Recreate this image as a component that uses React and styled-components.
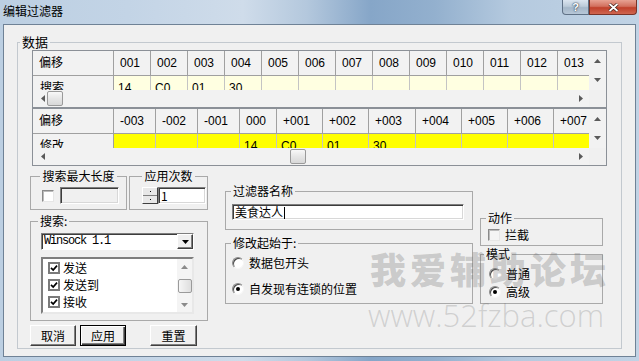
import React from "react";
import styled, { createGlobalStyle } from "styled-components";

const UI = '"Noto Sans CJK SC", "Liberation Sans", sans-serif';
const CELL = '"Liberation Sans", "Noto Sans CJK SC", sans-serif';

const GlobalStyle = createGlobalStyle`
  html, body { margin: 0; padding: 0; }
  body { width: 639px; height: 361px; overflow: hidden; background: #b9cde1; }
`;

const Window = styled.div`
  position: relative;
  box-sizing: border-box;
  width: 639px;
  height: 361px;
  display: flex;
  flex-direction: column;
  padding: 0 3px 4px 3px;
  font-family: ${UI};
  font-size: 12px;
  color: #000;
  background: linear-gradient(
    90deg,
    #bccfe2 0%,
    #c3d4e6 20%,
    #cfdcea 38%,
    #b4c8dd 48%,
    #86a6c8 58%,
    #93b0ce 68%,
    #b5cadf 80%,
    #c1d3e5 100%
  );
`;

const TitleBar = styled.div`
  flex: none;
  height: 24px;
  display: flex;
  justify-content: space-between;
  align-items: flex-start;
`;

const Title = styled.div`
  padding-top: 3px;
  line-height: 16px;
  font-size: 12px;
`;

const Caption = styled.div`
  display: flex;
  margin-right: -1px;
`;

const CaptionButton = styled.div`
  box-sizing: border-box;
  width: ${p => p.$w}px;
  height: 15px;
  display: flex;
  align-items: center;
  justify-content: center;
  border: 1px solid ${p => (p.$close ? "#7a3328" : "#5f7186")};
  border-top: none;
  border-radius: ${p => (p.$close ? "0 0 4px 0" : "0 0 0 4px")};
  background: ${p =>
    p.$close
      ? "linear-gradient(180deg, #e7a293 0%, #d2705e 45%, #c0402b 55%, #cf6650 100%)"
      : "linear-gradient(180deg, #dbe5ef 0%, #bccbd9 45%, #a5b7c9 55%, #b7c7d8 100%)"};
  color: #fff;
  font: bold 11px/1 "Liberation Sans", sans-serif;
  text-shadow: 0 0 2px #2a3a4c, 0 0 1px #2a3a4c;
`;

const Client = styled.div`
  flex: 1;
  display: flex;
  flex-direction: column;
  border: 1px solid #6f8296;
  background: #f0f0f0;
  padding: 9px 13px 7px 13px;
`;

const Group = styled.fieldset`
  box-sizing: border-box;
  margin: 0;
  padding: ${p => p.$pad || "0"};
  min-width: 0;
  width: ${p => (p.$w ? `${p.$w}px` : "auto")};
  height: ${p => (p.$h ? `${p.$h}px` : "auto")};
  flex: ${p => (p.$grow ? 1 : "none")};
  border: 1px solid ${p => p.$line || "#a9a9a9"};
`;

const Legend = styled.legend`
  padding: 0 2px;
  margin: ${p => (p.$center ? "0 auto" : `0 0 0 ${p.$x ?? 6}px`)};
  font-size: ${p => p.$size || 12}px;
  line-height: 16px;
  height: 16px;
`;

const GridFrame = styled.div`
  display: grid;
  grid-template-columns: 1fr 17px;
  grid-template-rows: 39px 17px;
  border: 1px solid #8b9097;
  background: #f0f0f0;
`;

const Cells = styled.div`
  overflow: hidden;
  background: #fff;
  font-family: ${CELL};
  font-size: 12px;
`;

const Row = styled.div`
  display: flex;
  height: 24px;
  border-bottom: ${p => (p.$head ? "1px solid #a0a0a0" : "none")};
`;

const Cell = styled.div`
  box-sizing: border-box;
  flex: none;
  width: ${p => p.$w}px;
  height: 24px;
  line-height: 24px;
  white-space: nowrap;
  padding-left: ${p => p.$pad}px;
  border-right: 1px solid ${p => (p.$head ? "#a0a0a0" : "#c4c4c4")};
  background: ${p => p.$bg};
`;

const VScroll = styled.div`
  display: flex;
  flex-direction: column;
  align-items: center;
  justify-content: space-between;
  padding: 8px 0 8px;
  background: #f2f2f2;
`;

const HScroll = styled.div`
  display: flex;
  align-items: center;
  background: #f2f2f2;
  padding: 0 6px 0 8px;
`;

const Track = styled.div`
  flex: 1;
  display: flex;
  align-items: center;
  height: 100%;
`;

const Thumb = styled.div`
  box-sizing: border-box;
  width: 16px;
  height: 15px;
  margin-left: ${p => p.$at}px;
  border: 1px solid #9a9a9a;
  border-radius: 2px;
  background: linear-gradient(180deg, #f8f8f8 0%, #e6e6e6 50%, #d8d8d8 100%);
`;

const Corner = styled.div`
  background: #f0f0f0;
`;

const Bottom = styled.div`
  display: flex;
  align-items: flex-start;
  margin-left: -2px;
`;

const Column = styled.div`
  display: flex;
  flex-direction: column;
  flex: none;
  width: ${p => p.$w}px;
  margin-left: ${p => p.$ml || 0}px;
  padding-top: ${p => p.$top || 0}px;
`;

const Pair = styled.div`
  display: flex;
  gap: 2px;
`;

const Line = styled.div`
  display: flex;
  align-items: center;
  gap: ${p => p.$gap ?? 5}px;
  padding: ${p => p.$pad || "0"};
  height: ${p => p.$h || 17}px;
`;

const Edit = styled.div`
  box-sizing: border-box;
  flex: none;
  width: ${p => p.$w}px;
  height: ${p => p.$h || 17}px;
  padding-left: 2px;
  border: 1px solid;
  border-color: #7e7e7e #ffffff #ffffff #7e7e7e;
  box-shadow: inset 1px 1px 0 #3c3c3c, inset -1px -1px 0 #d8d8d8;
  background: ${p => (p.$off ? "#f0f0f0" : "#fff")};
  font-size: 12px;
  line-height: ${p => (p.$h || 17) - 2}px;
  white-space: nowrap;
  overflow: hidden;
`;

const Caret = styled.span`
  display: inline-block;
  width: 1px;
  height: 12px;
  margin-left: 1px;
  vertical-align: -2px;
  background: #000;
`;

const Spinner = styled.div`
  box-sizing: border-box;
  flex: none;
  width: 16px;
  height: 17px;
  display: flex;
  flex-direction: column;
  border: 1px solid;
  border-color: #fff #404040 #404040 #fff;
  background: #e8e8e8;
`;

const SpinHalf = styled.div`
  flex: 1;
  border-bottom: ${p => (p.$top ? "1px solid #808080" : "none")};
  display: flex;
  align-items: center;
  justify-content: center;
`;

const Dot = styled.div`
  width: 1px;
  height: 1px;
  background: #000;
`;

const Box = styled.div`
  box-sizing: border-box;
  flex: none;
  width: ${p => p.$s || 12}px;
  height: ${p => p.$s || 12}px;
  display: flex;
  align-items: center;
  justify-content: center;
  border: ${p => (p.$thick ? "2px solid #7a7a7a" : "1px solid")};
  border-color: ${p => (p.$thick ? "#7a7a7a" : "#8a8a8a #e6e6e6 #e6e6e6 #8a8a8a")};
  box-shadow: ${p => (p.$thick ? "none" : "inset 1px 1px 0 #bcbcbc")};
  background: ${p => p.$bg || "#fff"};
`;

const Radio = styled.div`
  box-sizing: border-box;
  flex: none;
  width: 12px;
  height: 12px;
  display: flex;
  align-items: center;
  justify-content: center;
  border-radius: 50%;
  border: 1px solid;
  border-color: #8a8a8a #f6f6f6 #f6f6f6 #8a8a8a;
  box-shadow: inset 1px 1px 0 #4a4a4a;
  background: #fff;
`;

const RadioDot = styled.div`
  width: 4px;
  height: 4px;
  border-radius: 50%;
  background: #000;
`;

const Label = styled.span`
  font-size: 12px;
  line-height: 16px;
  white-space: nowrap;
`;

const Combo = styled.div`
  box-sizing: border-box;
  width: 153px;
  height: 17px;
  display: flex;
  align-items: center;
  border: 1px solid;
  border-color: #7e7e7e #fff #fff #7e7e7e;
  box-shadow: inset 1px 1px 0 #3c3c3c;
  background: #fff;
`;

const ComboText = styled.div`
  flex: 1;
  padding-left: 2px;
  font-family: "Liberation Mono", monospace;
  font-size: 12px;
  letter-spacing: -1.2px;
  line-height: 15px;
`;

const DropButton = styled.div`
  box-sizing: border-box;
  width: 16px;
  height: 15px;
  display: flex;
  align-items: center;
  justify-content: center;
  border: 1px solid;
  border-color: #fff #404040 #404040 #fff;
  box-shadow: inset -1px -1px 0 #808080;
  background: #f0f0f0;
`;

const List = styled.div`
  box-sizing: border-box;
  width: 153px;
  height: 57px;
  margin-top: 7px;
  display: flex;
  border: 2px solid;
  border-color: #7e7e7e #e8e8e8 #e8e8e8 #7e7e7e;
  background: #fff;
`;

const Items = styled.div`
  flex: 1;
  padding: 0 0 0 5px;
`;

const Item = styled.div`
  display: flex;
  align-items: center;
  gap: 3px;
  height: 17px;
`;

const ListScroll = styled.div`
  width: 15px;
  display: flex;
  flex-direction: column;
  align-items: center;
  justify-content: space-between;
  padding: 6px 0 5px;
  background: #f4f4f4;
`;

const ListThumb = styled.div`
  box-sizing: border-box;
  width: 14px;
  height: 14px;
  border: 1px solid #9a9a9a;
  border-radius: 2px;
  background: linear-gradient(90deg, #f6f6f6, #dedede);
`;

const Buttons = styled.div`
  display: flex;
  margin-top: 4px;
`;

const Button = styled.div`
  box-sizing: border-box;
  flex: none;
  width: ${p => p.$w}px;
  height: 21px;
  margin-left: ${p => p.$ml || 0}px;
  display: flex;
  align-items: center;
  justify-content: center;
  font-size: 12px;
  border: 1px solid;
  border-color: ${p => (p.$default ? "#000" : "#fff #404040 #404040 #fff")};
  box-shadow: ${p =>
    p.$default
      ? "inset 1px 1px 0 #fff, inset -1px -1px 0 #404040, inset -2px -2px 0 #808080"
      : "inset -1px -1px 0 #808080"};
  background: #f0f0f0;
`;

const Watermark = styled.div`
  position: absolute;
  left: ${p => p.$x}px;
  top: ${p => p.$y}px;
  font-family: ${p => p.$font};
  font-size: ${p => p.$size}px;
  font-weight: ${p => p.$weight};
  letter-spacing: ${p => p.$ls}px;
  line-height: 1;
  color: ${p => p.$color};
  white-space: nowrap;
  pointer-events: none;
`;

const Arrow = ({ dir, color = "#5a5a5a" }) => {
  const flat = dir === "up" || dir === "down";
  const w = flat ? 7 : 4;
  const h = flat ? 4 : 7;
  const pts = {
    up: "0,4 3.5,0 7,4",
    down: "0,0 7,0 3.5,4",
    left: "4,0 4,7 0,3.5",
    right: "0,0 0,7 4,3.5",
  }[dir];
  return (
    <svg width={w} height={h} viewBox={`0 0 ${w} ${h}`}>
      <polygon points={pts} fill={color} />
    </svg>
  );
};

const Check = () => (
  <svg width="8" height="8" viewBox="0 0 8 8">
    <path d="M1 3.8 L3.2 6 L7 1.6" fill="none" stroke="#000" strokeWidth="1.7" />
  </svg>
);

const grid1 = {
  label: "搜索",
  cols: Array.from({ length: 13 }, (_, i) => String(i + 1).padStart(3, "0")),
  widths: Array(13).fill(37),
  data: ["14", "C0", "01", "30"],
  fill: "#ffffe1",
  thumb: 2,
};

const grid2 = {
  label: "修改",
  cols: ["-003", "-002", "-001", "000", "+001", "+002", "+003", "+004", "+005", "+006", "+007"],
  widths: [42, 42, 42, 37, 46, 46, 47, 46, 46, 46, 46],
  data: ["", "", "", "14", "C0", "01", "30"],
  fill: "#ffff00",
  thumb: 245,
};

const DataGrid = ({ label, cols, widths, data, fill, thumb }) => (
  <GridFrame>
    <Cells>
      <Row $head>
        <Cell $w={81} $pad={6} $head $bg="#f2f2f2">偏移</Cell>
        {cols.map((c, i) => (
          <Cell key={c} $w={widths[i]} $pad={6} $head $bg="#f2f2f2">{c}</Cell>
        ))}
      </Row>
      <Row>
        <Cell $w={81} $pad={7} $head $bg="#f2f2f2">{label}</Cell>
        {cols.map((c, i) => (
          <Cell key={c} $w={widths[i]} $pad={4} $bg={fill}>{data[i] || ""}</Cell>
        ))}
      </Row>
    </Cells>
    <VScroll>
      <Arrow dir="up" />
      <Arrow dir="down" />
    </VScroll>
    <HScroll>
      <Arrow dir="left" />
      <Track>
        <Thumb $at={thumb} />
      </Track>
      <Arrow dir="right" />
    </HScroll>
    <Corner />
  </GridFrame>
);

const App = () => (
  <Window>
    <GlobalStyle />
    <TitleBar>
      <Title>编辑过滤器</Title>
      <Caption>
        <CaptionButton $w={27}>?</CaptionButton>
        <CaptionButton $w={48} $close>
          <svg width="11" height="9" viewBox="0 0 11 9">
            <path d="M1.5 1 L9.5 8 M9.5 1 L1.5 8" stroke="#3a1a14" strokeWidth="3.2" />
            <path d="M1.5 1 L9.5 8 M9.5 1 L1.5 8" stroke="#fff" strokeWidth="1.8" />
          </svg>
        </CaptionButton>
      </Caption>
    </TitleBar>

    <Client>
      <Group $grow $pad="0 14px" $line="#c3c9cf">
        <Legend $x={-12} $size={13}>数据</Legend>
        <DataGrid {...grid1} />
        <DataGrid {...grid2} />

        <Bottom>
          <Column $w={178} $top={2}>
            <Pair>
              <Group $w={97} $h={42}>
                <Legend $center>搜索最大长度</Legend>
                <Line $pad="3px 0 0 11px" $gap={6}>
                  <Box />
                  <Edit $w={59} $off />
                </Line>
              </Group>
              <Group $w={79} $h={42}>
                <Legend $center>应用次数</Legend>
                <Line $pad="3px 0 0 12px" $gap={0}>
                  <Spinner>
                    <SpinHalf $top><Dot /></SpinHalf>
                    <SpinHalf><Dot /></SpinHalf>
                  </Spinner>
                  <Edit $w={48}>1</Edit>
                </Line>
              </Group>
            </Pair>

            <Group $w={178} $h={108} $pad="4px 0 0 10px" style={{ marginTop: 3 }}>
              <Legend $x={-3}>搜索:</Legend>
              <Combo>
                <ComboText>Winsock 1.1</ComboText>
                <DropButton>
                  <Arrow dir="down" color="#000" />
                </DropButton>
              </Combo>
              <List>
                <Items>
                  {["发送", "发送到", "接收"].map(t => (
                    <Item key={t}>
                      <Box $thick>
                        <Check />
                      </Box>
                      <Label>{t}</Label>
                    </Item>
                  ))}
                </Items>
                <ListScroll>
                  <Arrow dir="up" color="#8a8a8a" />
                  <ListThumb />
                  <Arrow dir="down" color="#8a8a8a" />
                </ListScroll>
              </List>
            </Group>

            <Buttons>
              <Button $w={46}>取消</Button>
              <Button $w={46} $ml={4} $default>应用</Button>
              <Button $w={47} $ml={24}>重置</Button>
            </Buttons>
          </Column>

          <Column $w={248} $ml={17} $top={17}>
            <Group $w={248} $h={47} $pad="5px 0 0 6px">
              <Legend $x={-1}>过滤器名称</Legend>
              <Edit $w={232} $h={16}>
                美食达人<Caret />
              </Edit>
            </Group>
            <Group $w={248} $h={69} $pad="4px 0 0 6px" style={{ marginTop: 5 }}>
              <Legend $x={-1}>修改起始于:</Legend>
              <Line $h={16} $gap={5}>
                <Radio />
                <Label>数据包开头</Label>
              </Line>
              <Line $h={16} $gap={5} style={{ marginTop: 10 }}>
                <Radio>
                  <RadioDot />
                </Radio>
                <Label>自发现有连锁的位置</Label>
              </Line>
            </Group>
          </Column>

          <Column $w={123} $ml={7} $top={44}>
            <Group $w={123} $h={36} $pad="1px 0 0 7px">
              <Legend $x={-2}>动作</Legend>
              <Line $h={16} $gap={5}>
                <Box $bg="#f4f4f4" />
                <Label>拦截</Label>
              </Line>
            </Group>
            <Group $w={123} $h={58} $pad="3px 0 0 8px">
              <Legend $x={-5}>模式</Legend>
              <Line $h={18} $gap={5}>
                <Radio />
                <Label>普通</Label>
              </Line>
              <Line $h={18} $gap={5}>
                <Radio>
                  <RadioDot />
                </Radio>
                <Label>高级</Label>
              </Line>
            </Group>
          </Column>
        </Bottom>
      </Group>
    </Client>

    <Watermark
      $x={370}
      $y={250}
      $size={36}
      $ls={4}
      $weight={900}
      $font={UI}
      $color="rgba(110,110,110,0.3)"
    >
      我爱辅助论坛
    </Watermark>
    <Watermark
      $x={368}
      $y={300}
      $size={31}
      $ls={0}
      $weight={300}
      $font='"Open Sans", "Noto Sans", sans-serif'
      $color="rgba(110,110,110,0.25)"
    >
      www.52fzba.com
    </Watermark>
  </Window>
);

export default App;
